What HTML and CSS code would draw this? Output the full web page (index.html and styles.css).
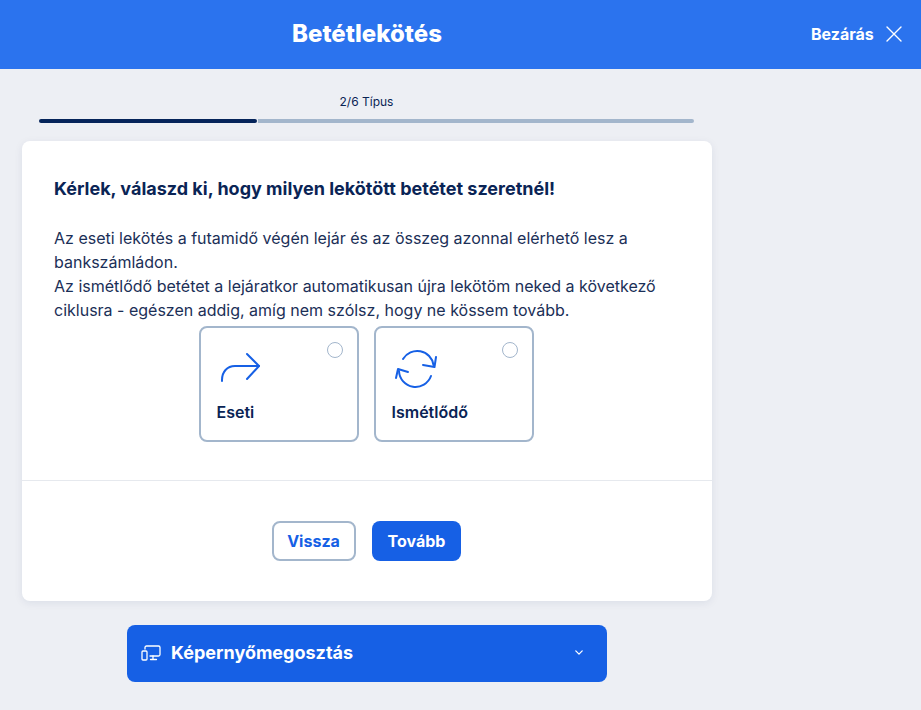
FILE: index.html
```html
<!DOCTYPE html>
<html lang="hu">
<head>
    <meta charset="UTF-8">
    <meta name="viewport" content="width=device-width, initial-scale=1.0">
    <title>Betétlekötés</title>
    <link rel="stylesheet" href="styles.css">
</head>
<body>

    <header class="topbar">
        <div class="topbar-title">Betétlekötés</div>
        <div class="topbar-close">
            <span>Bezárás</span>
            <svg class="close-icon" viewBox="0 0 16 16" width="16" height="16" fill="none" stroke="#fff" stroke-width="1.4" stroke-linecap="round">
                <path d="M1 1l14 14M15 1L1 15"/>
            </svg>
        </div>
    </header>

    <main class="wizard">
        <div class="progress">
            <div class="progress-label">2/6 Típus</div>
            <div class="progress-track">
                <div class="progress-done"></div>
                <div class="progress-rest"></div>
            </div>
        </div>

        <section class="card">
            <div class="card-body">
                <h1>Kérlek, válaszd ki, hogy milyen lekötött betétet szeretnél!</h1>
                <p>Az eseti lekötés a futamidő végén lejár és az összeg azonnal elérhető lesz a bankszámládon.<br>Az ismétlődő betétet a lejáratkor automatikusan újra lekötöm neked a következő ciklusra - egészen addig, amíg nem szólsz, hogy ne kössem tovább.</p>

                <div class="options">
                    <div class="option">
                        <span class="radio"></span>
                        <svg class="option-icon" viewBox="0 0 46 44" width="46" height="44" fill="none" stroke="#1660e5" stroke-width="2" stroke-linecap="round" stroke-linejoin="round">
                            <path d="M5 35v-1c0-8 5-14 13-14h24"/>
                            <path d="M30 8l12 12-12 13"/>
                        </svg>
                        <div class="option-name">Eseti</div>
                    </div>
                    <div class="option">
                        <span class="radio"></span>
                        <svg class="option-icon" viewBox="0 0 46 44" width="46" height="44" fill="none" stroke="#1660e5" stroke-width="2" stroke-linecap="round" stroke-linejoin="round">
                            <path d="M11 13A16.500 16.500 0 0 1 41.500 19"/>
                            <path d="M44 11l-1.500 10-11.500-2"/>
                            <path d="M39 30A16.500 16.500 0 0 1 7 25"/>
                            <path d="M4 32l2-9 10 3"/>
                        </svg>
                        <div class="option-name">Ismétlődő</div>
                    </div>
                </div>
            </div>

            <div class="card-footer">
                <button class="btn btn-outline">Vissza</button>
                <button class="btn btn-primary">Tovább</button>
            </div>
        </section>

        <div class="share">
            <svg class="share-icon" viewBox="0 0 20 16" width="20" height="16" fill="none" stroke="#fff" stroke-width="1.300" stroke-linecap="round" stroke-linejoin="round">
                <path d="M4 4V2.500A1.500 1.500 0 0 1 5.500 1h12A1.500 1.500 0 0 1 19 2.500v7a1.500 1.500 0 0 1-1.500 1.500H9"/>
                <rect x="1" y="6" width="5" height="9" rx="1"/>
                <path d="M12 11v3M9.500 14.500h6"/>
            </svg>
            <span class="share-title">Képernyőmegosztás</span>
            <svg class="share-chevron" viewBox="0 0 10 6" width="8" height="5" fill="none" stroke="#fff" stroke-width="1.600" stroke-linecap="round" stroke-linejoin="round">
                <path d="M1 1l4 4 4-4"/>
            </svg>
        </div>
    </main>

</body>
</html>
```

FILE: styles.css
```css
* {
    box-sizing: border-box;
}

body {
    margin: 0;
    font-family: Inter, "Liberation Sans", sans-serif;
    background-color: #edeff4;
    color: #0a2455;
}

.topbar {
    display: flex;
    align-items: center;
    height: 69px;
    padding-bottom: 2px;
    background-color: #2b73ee;
    color: #fff;
}

.topbar-title {
    width: 734px;
    text-align: center;
    font-size: 24px;
    font-weight: 800;
}

.topbar-close {
    display: flex;
    align-items: center;
    gap: 12px;
    margin-left: 77px;
    font-size: 16px;
    font-weight: 700;
}

.wizard {
    width: 690px;
    margin-left: 22px;
}

.progress {
    padding: 25px 18px 0 17px;
}

.progress-label {
    font-size: 12px;
    line-height: 15px;
    text-align: center;
    color: #0a2455;
}

.progress-track {
    display: flex;
    gap: 1px;
    margin-top: 10px;
}

.progress-done {
    width: 218px;
    height: 4px;
    border-radius: 2px;
    background-color: #05245a;
}

.progress-rest {
    flex: 1;
    height: 4px;
    border-radius: 0 2px 2px 0;
    background-color: #a3b6cc;
}

.card {
    margin-top: 18px;
    background: #fff;
    border-radius: 8px;
    box-shadow: 0 2px 8px rgba(10, 36, 85, 0.08);
}

.card-body {
    padding: 36px 32px 38px;
    border-bottom: 1px solid #e6e9ee;
}

h1 {
    margin: 0 0 25px;
    font-size: 18px;
    line-height: 24px;
    font-weight: 700;
}

p {
    margin: 0;
    font-size: 16px;
    line-height: 24px;
    color: #1b2f57;
}

.options {
    display: flex;
    justify-content: center;
    gap: 15px;
    margin-top: 4px;
    padding-right: 2px;
}

.option {
    position: relative;
    width: 160px;
    height: 116px;
    padding: 18px 16px 0;
    border: 2px solid #a3b6cc;
    border-radius: 8px;
}

.radio {
    position: absolute;
    top: 14px;
    right: 14px;
    width: 16px;
    height: 16px;
    border: 1px solid #a3b6cc;
    border-radius: 50%;
}

.option-icon {
    display: block;
}

.option-name {
    margin-top: 10px;
    font-size: 16px;
    line-height: 24px;
    font-weight: 600;
}

.card-footer {
    display: flex;
    justify-content: center;
    gap: 16px;
    padding: 40px 2px 40px 0;
}

.btn {
    height: 40px;
    padding: 0 16px;
    border-radius: 8px;
    font-family: inherit;
    font-size: 16px;
    font-weight: 700;
}

.btn-outline {
    width: 84px;
    padding: 0;
    background: #fff;
    border: 2px solid #a3b6cc;
    color: #1660e5;
}

.btn-primary {
    width: 89px;
    background: #1660e5;
    border: none;
    color: #fff;
}

.share {
    display: flex;
    align-items: center;
    width: 480px;
    height: 57px;
    margin: 24px 0 0 105px;
    padding: 0 24px 2px 14px;
    background: #1660e5;
    border-radius: 8px;
    color: #fff;
}

.share-icon {
    margin-right: 10px;
}

.share-title {
    flex: 1;
    font-size: 18px;
    font-weight: 700;
}
```
